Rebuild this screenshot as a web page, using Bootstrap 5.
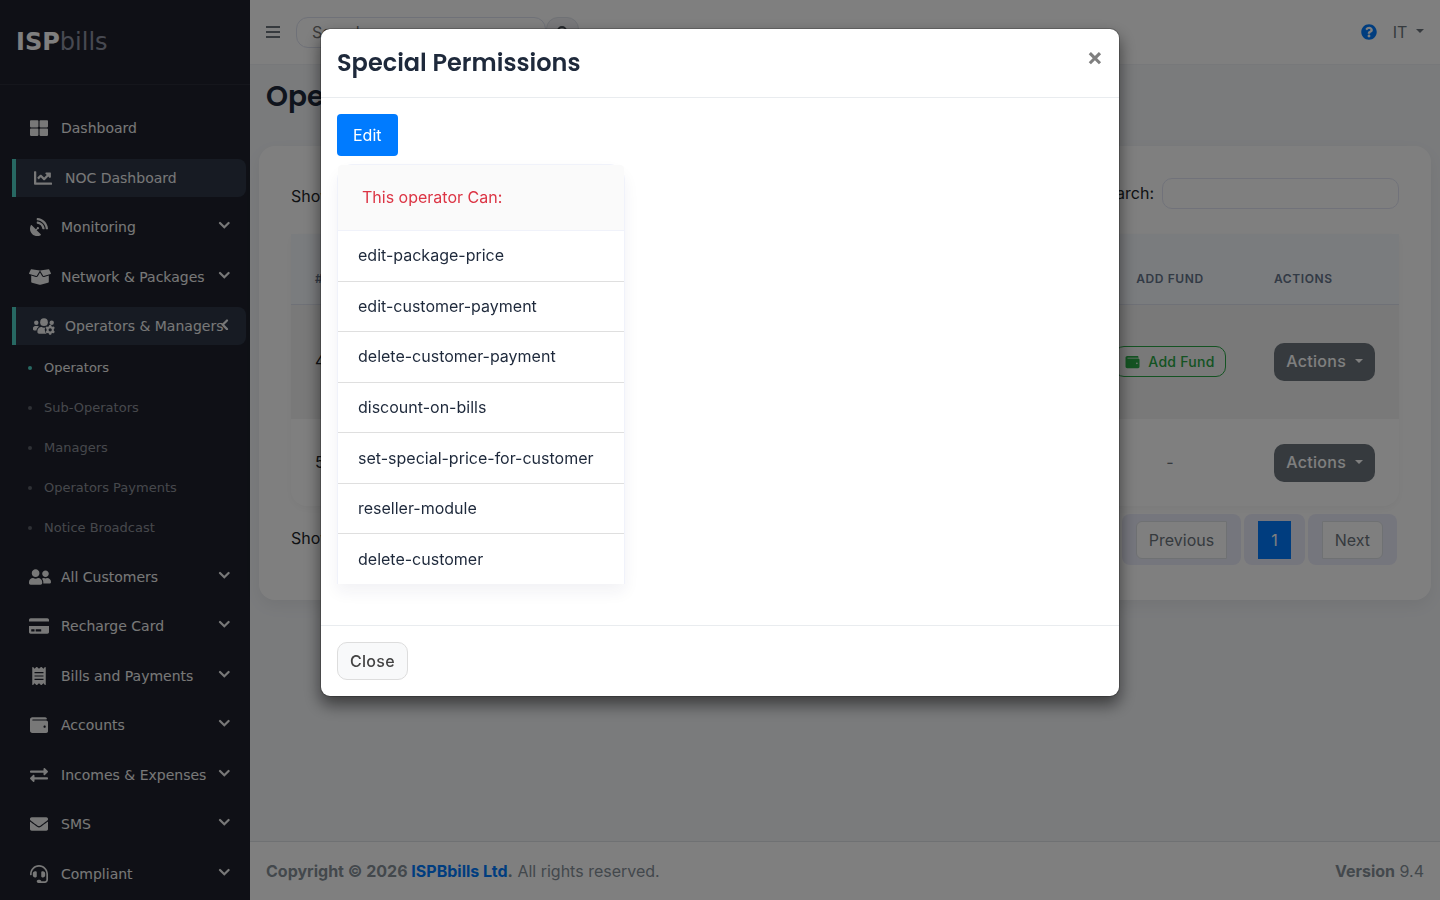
<!DOCTYPE html>
<html lang="en">
<head>
<meta charset="utf-8">
<meta name="viewport" content="width=device-width, initial-scale=1">
<title>Operators</title>
<link rel="stylesheet" href="https://cdn.jsdelivr.net/npm/bootstrap@5.3.0/dist/css/bootstrap.min.css">
<style>
  :root { --ink: #1e293b; }
  body { font-family: Inter, "Liberation Sans", sans-serif; font-size: 16px; line-height: 25px; color: #212529; background: #f4f6f9; }
  a { text-decoration: none; }
  .heading { font-family: Poppins, Inter, sans-serif; font-weight: 600; color: var(--ink); }
  svg { fill: currentColor; display: block; }

  .side { width: 250px; background: #1e212c; font-family: "DejaVu Sans", sans-serif; }
  .brand-bar { height: 85px; padding: 0 16px; font-size: 24px; color: #fff; border-bottom: 1px solid #2a2d38; }
  .brand-bar b { font-weight: 700; }
  .brand-bar span { color: #8f93a3; }
  .menu { padding: 24px 4px 0 12px; font-size: 14px; line-height: 22px; }
  .menu > li { margin-bottom: 12px; }
  .menu > li:nth-child(even) { margin-bottom: 11px; }
  .menu-link { height: 38px; padding: 0 16px 0 18px; color: #f0f0f0; border-radius: 0 8px 8px 0; position: relative; white-space: nowrap; }
  .menu-link.current { background: #2e3747; border-left: 4px solid #4fd1c5; }
  .menu-link .pic { width: 31px; flex: none; }
  .menu-link .wide { margin-left: -1px; }
  .menu-link .arrow { position: absolute; right: 16px; top: 11px; }
  .submenu { font-size: 13px; padding: 3px 0 0 16px; margin-bottom: -2px; }
  .submenu a { height: 40px; color: #8d9099; gap: 12px; }
  .submenu a::before { content: ""; width: 4px; height: 4px; border-radius: 50%; background: #5d606a; }
  .submenu a.current { color: #f0f0f0; }
  .submenu a.current::before { background: #4fd1c5; }

  .topbar { height: 65px; padding: 0 16px; background: #fff; border-bottom: 1px solid #eff1f5; color: #6c757d; }
  .top-search { width: 250px; height: 31px; border: 1px solid #dee2f0; border-radius: 12px; padding: 0 15px; background: #fff; }
  .top-go { width: 33px; height: 31px; border: 1px solid #dee2ea; border-radius: 12px; background: #f0f1f4; color: #495057; }
  .plain { border: 0; background: none; padding: 0; color: inherit; }
  .help { color: #007bff; }

  .page-title { font-size: 28px; line-height: 36px; padding: 14px 16px; margin: 0; }
  .panel { background: #fff; border-radius: 16px; margin: 17px 9px 0; padding: 32px 32px 35px; box-shadow: 0 6px 16px rgba(0,0,0,.06); }
  .length { padding-top: 6px; }
  .length select { border: 1px solid #d8dcf0; border-radius: 10px; background: #fff; line-height: 20px; }
  .filter { width: 237px; height: 31px; border: 1px solid #e2e5f4; border-radius: 10px; background: #fff; }
  .grid { width: 100%; margin: 25px 0 8px; border-radius: 0 0 16px 16px; box-shadow: 0 3px 8px rgba(0,0,0,.04); }
  .grid th { height: 70px; padding: 0 24px 16px; vertical-align: bottom; background: #f5f8fc; border-bottom: 1px solid #dfe3ee; font-size: 12px; line-height: 19px; font-weight: 600; letter-spacing: .05em; text-transform: uppercase; color: #64748b; }
  .grid td { padding: 24px; }
  .grid tbody tr { height: 87px; }
  .grid tbody tr:first-child { height: 115px; background: #f2f2f2; }
  .col-no { width: 90px; } .col-fund { width: 160px; } .col-act { width: 149px; }
  .btn-act { width: 101px; height: 38px; padding: 0; background: #6c757d; color: #fff; border: 0; border-radius: 10px; white-space: nowrap; }
  .btn-fund { height: 31px; padding: 0 10px; border: 1px solid #28a745; border-radius: 10px; color: #28a745; font-size: 14px; background: none; gap: 8px; white-space: nowrap; }
  .btn-act, .btn-fund, .btn-shut { font-weight: 500; letter-spacing: .02em; }
  .pager { gap: 3px; padding-right: 2px; }
  .pager li { background: #ebecfa; border-radius: 8px; padding: 7px 14px; height: 51px; }
  .pager a { display: block; height: 38px; line-height: 36px; padding: 0 12px; background: #fff; border: 1px solid #dee2e6; color: #6c757d; }
  .pager .on { background: #007bff; border-color: #007bff; color: #fff; }
  .foot { height: 59px; padding: 0 16px; background: #fff; border-top: 1px solid #dee2e6; color: #869099; }
  .foot a { color: #007bff; }

  .modal-content { border: 1px solid rgba(0,0,0,.2); border-radius: 10px; box-shadow: 0 8px 16px rgba(0,0,0,.5); color: var(--ink); background-clip: padding-box; }
  .modal-header { padding: 16px; border-color: #e9ecef; }
  .modal-title { font-size: 24px; line-height: 36px; }
  .shut { font-size: 24px; line-height: 24px; font-weight: 700; color: #7f7f7f; }
  .btn-edit { height: 42px; padding: 0 16px; background: #007bff; color: #fff; border-radius: 4px; }
  .perms { width: 288px; margin: 8px 0 25px; border: 1px solid #f0f2fa; border-bottom: 0; border-radius: 16px 16px 0 0; box-shadow: 0 8px 16px rgba(30,30,80,.06); }
  .perms-head { height: 66px; padding: 0 24px; background: #fafafa; color: #dc3545; border-bottom: 1px solid #f0f2fa; border-radius: 4px 4px 0 0; }
  .perms ul { min-height: 353px; background: #fff; }
  .perms li { flex: 1 1 0; padding: 0 20px; }
  .perms li + li { border-top: 1px solid #dfdfdf; }
  .modal-footer { padding: 16px; border-color: #e9ecef; }
  .modal-footer > * { margin: 0; }
  .btn-shut { width: 71px; height: 38px; padding: 0; background: #f8f9fa; border: 1px solid #ddd; border-radius: 10px; color: #444; }
</style>
</head>
<body>
<svg width="0" height="0" class="position-absolute" aria-hidden="true">
  <defs>
    <symbol id="down" viewBox="0 0 12 12"><path d="M2 4l4.300 4.300L10.600 4" fill="none" stroke="currentColor" stroke-width="2.200" stroke-linecap="round"/></symbol>
    <symbol id="left" viewBox="0 0 12 12"><path d="M9 2.500L4.700 6.800 9 11.100" fill="none" stroke="currentColor" stroke-width="2.200" stroke-linecap="round"/></symbol>
    <symbol id="wallet" viewBox="0 0 512 512"><path d="M461.2 128H80c-8.84 0-16-7.16-16-16s7.16-16 16-16h384c8.84 0 16-7.16 16-16 0-26.51-21.49-48-48-48H64C28.65 32 0 60.65 0 96v320c0 35.35 28.65 64 64 64h397.2c28.02 0 50.8-21.53 50.8-48V176c0-26.47-22.78-48-50.8-48zM416 336c-17.67 0-32-14.33-32-32s14.33-32 32-32 32 14.33 32 32-14.33 32-32 32z"/></symbol>
  </defs>
</svg>
<div class="d-flex vh-100 overflow-hidden">
  <aside class="side flex-shrink-0 overflow-hidden">
    <div class="brand-bar d-flex align-items-center"><b>ISP</b><span>bills</span></div>
    <ul class="menu list-unstyled mb-0">
      <li><a href="#" class="menu-link d-flex align-items-center"><span class="pic"><svg width="18" height="18" viewBox="0 0 512 512"><path d="M296 32h192c13.255 0 24 10.745 24 24v160c0 13.255-10.745 24-24 24H296c-13.255 0-24-10.745-24-24V56c0-13.255 10.745-24 24-24zm-80 0H24C10.745 32 0 42.745 0 56v160c0 13.255 10.745 24 24 24h192c13.255 0 24-10.745 24-24V56c0-13.255-10.745-24-24-24zM0 296v160c0 13.255 10.745 24 24 24h192c13.255 0 24-10.745 24-24V296c0-13.255-10.745-24-24-24H24c-13.255 0-24 10.745-24 24zm296 184h192c13.255 0 24-10.745 24-24V296c0-13.255-10.745-24-24-24H296c-13.255 0-24 10.745-24 24v160c0 13.255 10.745 24 24 24z"/></svg></span>Dashboard</a></li>
      <li><a href="#" class="menu-link current d-flex align-items-center"><span class="pic"><svg width="18" height="18" viewBox="0 0 512 512"><path d="M496 384H64V80c0-8.84-7.16-16-16-16H16C7.16 64 0 71.16 0 80v336c0 17.67 14.33 32 32 32h464c8.84 0 16-7.16 16-16v-32c0-8.84-7.16-16-16-16zM464 96H345.94c-21.38 0-32.09 25.85-16.97 40.97l32.4 32.4L288 242.75l-73.37-73.37c-12.5-12.5-32.76-12.5-45.25 0l-68.69 68.69c-6.25 6.25-6.25 16.38 0 22.63l22.62 22.62c6.25 6.25 16.38 6.25 22.63 0L192 237.25l73.37 73.37c12.5 12.5 32.76 12.5 45.25 0l96-96 32.4 32.4c15.12 15.12 40.97 4.41 40.97-16.97V112c.01-8.84-7.15-16-15.99-16z"/></svg></span>NOC Dashboard</a></li>
      <li><a href="#" class="menu-link d-flex align-items-center"><span class="pic"><svg width="18" height="18" viewBox="0 0 512 512"><path d="M305.45 462.59c7.39 7.29 6.18 20.1-3 25-77.71 41.8-176.72 29.9-242.35-35.7-65.62-65.7-77.45-164.6-35.6-242.4 4.9-9.1 17.69-10.3 25-3L166.23 323.35l27.4-27.4c-.68-2.6-1.6-5-1.6-7.8a32 32 0 1 1 32 32c-2.8 0-5.2-.9-7.8-1.6l-27.4 27.4zM511.98 303.06c.5 9.1-7.2 16.8-16.3 16.8h-32c-8.5 0-15.5-6.6-16.1-15.1C440.2 179.9 332 71.8 207.1 64.4c-8.5-.5-15.1-7.5-15.1-16.1v-32c0-9.1 7.7-16.8 16.8-16.3C371 9.1 503 140.9 511.98 303.06zm-96.2-.2c.6 9.2-7.1 17-16.3 17h-32c-8.3 0-15.4-6.3-16.1-14.6C344.9 229 283 167 206.7 160.6c-8.3-.7-14.7-7.8-14.7-16.1v-32c0-9.3 7.8-16.9 17-16.3 110.3 7.2 199.6 96.6 206.8 206.7z"/></svg></span>Monitoring<svg class="arrow" width="12" height="12"><use href="#down"/></svg></a></li>
      <li><a href="#" class="menu-link d-flex align-items-center"><span class="pic"><svg class="wide" width="22" height="18" viewBox="0 0 640 512"><path d="M425.7 256c-16.9 0-32.8-9-41.4-23.4L320 126l-64.2 106.6c-8.7 14.5-24.6 23.5-41.5 23.5-4.5 0-9-.6-13.3-1.9L64 215v178c0 14.7 10 27.5 24.2 31l216.2 54.1c10.2 2.5 20.9 2.5 31 0L551.8 424c14.2-3.6 24.2-16.4 24.2-31V215l-137 39.1c-4.3 1.3-8.8 1.9-13.3 1.9zm212.6-112.2L586.8 41c-3.1-6.2-9.8-9.8-16.7-8.9L320 64l91.7 152.1c3.8 6.3 11.4 9.3 18.5 7.3l197.9-56.5c9.9-2.9 14.7-13.9 10.2-23.1zM53.2 41L1.7 143.8c-4.6 9.2.3 20.2 10.1 23l197.9 56.5c7.1 2 14.7-1 18.5-7.3L320 64 69.8 32.1c-6.9-.8-13.5 2.7-16.6 8.900z"/></svg></span>Network &amp; Packages<svg class="arrow" width="12" height="12"><use href="#down"/></svg></a></li>
      <li>
        <a href="#" class="menu-link current d-flex align-items-center"><span class="pic"><svg class="wide" width="22" height="18" viewBox="0 0 640 512"><defs><mask id="gearcut"><rect width="640" height="512" fill="#fff"/><circle cx="500" cy="368" r="158" fill="#000"/></mask></defs><circle cx="96" cy="160" r="64"/><circle cx="320" cy="144" r="112"/><circle cx="544" cy="160" r="64"/><g mask="url(#gearcut)"><path d="M64 256h64c18 0 34 7 45 19-40 22-66 60-73 109H32c-18 0-32-14-32-32v-32c0-35 29-64 64-64zM243 288h9c44 21 93 21 137 0l60 40v152H176c-27 0-48-21-48-48v-29c0-64 52-115 115-115z"/></g><path fill-rule="evenodd" d="M472 224h56l8 38 32 18 38-12 28 48-28 26v52l28 26-28 48-38-12-32 18-8 38h-56l-8-38-32-18-38 12-28-48 28-26v-52l-28-26 28-48 38 12 32-18zM500 320a48 48 0 1 0 0 96 48 48 0 0 0 0-96z"/></svg></span>Operators &amp; Managers<svg class="arrow" width="12" height="12"><use href="#left"/></svg></a>
        <ul class="submenu list-unstyled">
          <li><a href="#" class="current d-flex align-items-center">Operators</a></li>
          <li><a href="#" class="d-flex align-items-center">Sub-Operators</a></li>
          <li><a href="#" class="d-flex align-items-center">Managers</a></li>
          <li><a href="#" class="d-flex align-items-center">Operators Payments</a></li>
          <li><a href="#" class="d-flex align-items-center">Notice Broadcast</a></li>
        </ul>
      </li>
      <li><a href="#" class="menu-link d-flex align-items-center"><span class="pic"><svg class="wide" width="22" height="18" viewBox="0 0 640 512"><path d="M192 256c61.9 0 112-50.1 112-112S253.900 32 192 32 80 82.1 80 144s50.1 112 112 112zm76.800 32h-8.300c-20.800 10-43.900 16-68.500 16s-47.600-6-68.500-16h-8.300C51.600 288 0 339.600 0 403.200V432c0 26.500 21.500 48 48 48h288c26.500 0 48-21.500 48-48v-28.800c0-63.600-51.600-115.200-115.200-115.200zM480 256c53 0 96-43 96-96s-43-96-96-96-96 43-96 96 43 96 96 96zm48 32h-3.800c-13.900 4.800-28.600 8-44.200 8s-30.300-3.200-44.200-8H432c-20.400 0-39.200 5.900-55.700 15.400 24.400 26.300 39.700 61.200 39.700 99.800v38.400c0 2.200-.5 4.300-.6 6.400H592c26.500 0 48-21.500 48-48 0-61.900-50.100-112-112-112z"/></svg></span>All Customers<svg class="arrow" width="12" height="12"><use href="#down"/></svg></a></li>
      <li><a href="#" class="menu-link d-flex align-items-center"><span class="pic"><svg class="wide" width="20" height="18" viewBox="0 0 576 512"><path d="M0 432c0 26.500 21.500 48 48 48h480c26.500 0 48-21.500 48-48V256H0v176zm192-68c0-6.600 5.400-12 12-12h136c6.600 0 12 5.400 12 12v40c0 6.600-5.400 12-12 12H204c-6.600 0-12-5.400-12-12v-40zm-128 0c0-6.600 5.400-12 12-12h72c6.600 0 12 5.400 12 12v40c0 6.600-5.400 12-12 12H76c-6.600 0-12-5.400-12-12v-40zM576 80v48H0V80c0-26.500 21.500-48 48-48h480c26.500 0 48 21.500 48 48z"/></svg></span>Recharge Card<svg class="arrow" width="12" height="12"><use href="#down"/></svg></a></li>
      <li><a href="#" class="menu-link d-flex align-items-center"><span class="pic"><svg width="18" height="18" viewBox="-64 0 512 512"><path d="M358.400 3.200L320 48 265.600 3.200a15.900 15.900 0 0 0-19.200 0L192 48 137.600 3.200a15.900 15.900 0 0 0-19.200 0L64 48 25.600 3.200C15-4.700 0 2.800 0 16v480c0 13.200 15 20.700 25.600 12.800L64 464l54.400 44.800a15.900 15.900 0 0 0 19.200 0L192 464l54.400 44.800a15.900 15.900 0 0 0 19.200 0L320 464l38.400 44.800c10.500 7.900 25.600.4 25.600-12.800V16c0-13.200-15-20.700-25.600-12.800zM320 360c0 4.400-3.600 8-8 8H72c-4.400 0-8-3.600-8-8v-16c0-4.400 3.600-8 8-8h240c4.400 0 8 3.600 8 8v16zm0-96c0 4.400-3.600 8-8 8H72c-4.400 0-8-3.600-8-8v-16c0-4.400 3.600-8 8-8h240c4.400 0 8 3.600 8 8v16zm0-96c0 4.400-3.600 8-8 8H72c-4.400 0-8-3.600-8-8v-16c0-4.400 3.600-8 8-8h240c4.400 0 8 3.600 8 8v16z"/></svg></span>Bills and Payments<svg class="arrow" width="12" height="12"><use href="#down"/></svg></a></li>
      <li><a href="#" class="menu-link d-flex align-items-center"><span class="pic"><svg width="18" height="18"><use href="#wallet"/></svg></span>Accounts<svg class="arrow" width="12" height="12"><use href="#down"/></svg></a></li>
      <li><a href="#" class="menu-link d-flex align-items-center"><span class="pic"><svg width="18" height="18" viewBox="0 0 512 512"><path d="M0 168v-16c0-13.255 10.745-24 24-24h360V80c0-21.367 25.899-32.042 40.971-16.971l80 80c9.372 9.373 9.372 24.569 0 33.941l-80 80C409.956 271.982 384 261.456 384 240v-48H24c-13.255 0-24-10.745-24-24zm488 152H128v-48c0-21.314-25.862-32.080-40.971-16.971l-80 80c-9.372 9.373-9.372 24.569 0 33.941l80 80C102.057 463.997 128 453.437 128 432v-48h360c13.255 0 24-10.745 24-24v-16c0-13.255-10.745-24-24-24z"/></svg></span>Incomes &amp; Expenses<svg class="arrow" width="12" height="12"><use href="#down"/></svg></a></li>
      <li><a href="#" class="menu-link d-flex align-items-center"><span class="pic"><svg width="18" height="18" viewBox="0 0 512 512"><path d="M502.300 190.800c3.900-3.100 9.700-.2 9.700 4.700V400c0 26.500-21.500 48-48 48H48c-26.500 0-48-21.500-48-48V195.600c0-5 5.700-7.800 9.700-4.700 22.400 17.400 52.100 39.500 154.100 113.600 21.100 15.400 56.700 47.800 92.200 47.600 35.700.3 72-32.800 92.300-47.600 102-74.100 131.600-96.300 154-113.700zM256 320c23.200.4 56.600-29.200 73.400-41.400 132.700-96.300 142.800-104.700 173.400-128.700 5.800-4.500 9.200-11.500 9.200-18.900v-19c0-26.500-21.500-48-48-48H48c-26.500 0-48 21.500-48 48v19c0 7.400 3.400 14.300 9.200 18.900 30.600 23.900 40.700 32.400 173.400 128.700 16.800 12.200 50.200 41.800 73.400 41.400z"/></svg></span>SMS<svg class="arrow" width="12" height="12"><use href="#down"/></svg></a></li>
      <li><a href="#" class="menu-link d-flex align-items-center"><span class="pic"><svg width="18" height="18" viewBox="0 0 512 512"><path d="M192 208c0-17.670-14.330-32-32-32h-16c-35.350 0-64 28.650-64 64v48c0 35.350 28.650 64 64 64h16c17.670 0 32-14.330 32-32V208zm176 144c35.350 0 64-28.650 64-64v-48c0-35.350-28.650-64-64-64h-16c-17.670 0-32 14.330-32 32v112c0 17.670 14.330 32 32 32h16zM256 0C113.180 0 4.580 118.830 0 256v16c0 8.840 7.160 16 16 16h16c8.840 0 16-7.160 16-16v-16c0-114.690 93.310-208 208-208s208 93.310 208 208h-.12c.08 2.430.12 165.720.12 165.720 0 23.350-18.930 42.280-42.280 42.280H320c0-26.510-21.490-48-48-48h-32c-26.510 0-48 21.490-48 48s21.490 48 48 48h181.720c49.860 0 90.280-40.420 90.280-90.280V256C507.420 118.830 398.820 0 256 0z"/></svg></span>Compliant<svg class="arrow" width="12" height="12"><use href="#down"/></svg></a></li>
    </ul>
  </aside>

  <div class="d-flex flex-column flex-grow-1">
    <header class="topbar d-flex align-items-center">
      <button class="plain" aria-label="Toggle menu"><svg width="14" height="14" viewBox="0 0 14 14"><path d="M0 1h14v2H0zM0 6h14v2H0zM0 11h14v2H0z"/></svg></button>
      <form class="d-flex ms-3"><input class="top-search" type="search" placeholder="Search" aria-label="Search"><button type="button" class="top-go d-flex align-items-center justify-content-center p-0" aria-label="Go"><svg width="14" height="14" viewBox="0 0 14 14"><path d="M10 6A4 4 0 1 1 2 6a4 4 0 0 1 8 0zM9 9l4 4" fill="none" stroke="currentColor" stroke-width="2"/></svg></button></form>
      <div class="ms-auto d-flex align-items-center gap-3">
        <a href="#" aria-label="Help" class="help"><svg width="16" height="16" viewBox="0 0 512 512"><path d="M504 256c0 136.997-111.043 248-248 248S8 392.997 8 256C8 119.083 119.043 8 256 8s248 111.083 248 248zM262.655 90c-54.497 0-89.255 22.957-116.549 63.758-3.536 5.286-2.353 12.415 2.715 16.258l34.699 26.310c5.205 3.947 12.621 3.008 16.665-2.122 17.864-22.658 30.113-35.797 57.303-35.797 20.429 0 45.698 13.148 45.698 32.958 0 14.976-12.363 22.667-32.534 33.976C247.128 238.528 216 254.941 216 296v4c0 6.627 5.373 12 12 12h56c6.627 0 12-5.373 12-12v-1.333c0-28.462 83.186-29.647 83.186-106.667 0-58.002-60.165-102-116.531-102zM256 338c-25.365 0-46 20.635-46 46 0 25.364 20.635 46 46 46s46-20.636 46-46c0-25.364-20.635-46-46-46z"/></svg></a>
        <button class="plain dropdown-toggle">IT&nbsp;</button>
      </div>
    </header>
    <main class="flex-grow-1">
      <h1 class="heading page-title">Operators</h1>
      <section class="panel">
        <div class="d-flex justify-content-between align-items-center">
          <label class="length">Show <select><option>10</option><option>25</option></select></label>
          <div class="d-flex align-items-center gap-2"><label for="filter">Search:</label><input id="filter" class="filter" type="text"></div>
        </div>
        <table class="grid">
          <thead><tr><th class="col-no">#</th><th>Name</th><th class="col-fund text-center">Add Fund</th><th class="col-act">Actions</th></tr></thead>
          <tbody>
            <tr><td>4</td><td></td><td class="text-center px-0"><button class="btn-fund d-inline-flex align-items-center"><svg width="15" height="14"><use href="#wallet"/></svg>Add Fund</button></td><td><button class="btn-act dropdown-toggle">Actions&nbsp;</button></td></tr>
            <tr><td>5</td><td></td><td class="text-center text-secondary">-</td><td><button class="btn-act dropdown-toggle">Actions&nbsp;</button></td></tr>
          </tbody>
        </table>
        <div class="d-flex justify-content-between align-items-start">
          <span class="pt-2 mt-1">Showing 1 to 2 of 2 entries</span>
          <ul class="pager list-unstyled d-flex mb-0">
            <li><a href="#" class="rounded-start">Previous</a></li><li><a href="#" class="on">1</a></li><li><a href="#" class="rounded-end">Next</a></li>
          </ul>
        </div>
      </section>
    </main>
    <footer class="foot d-flex align-items-center justify-content-between">
      <div><strong>Copyright © 2026 <a href="#">ISPBbills Ltd</a>.</strong> All rights reserved.</div>
      <div><b>Version</b> 9.4</div>
    </footer>
  </div>
</div>

<div class="modal-backdrop show"></div>
<div class="modal d-block" role="dialog" aria-labelledby="perm-title">
  <div class="modal-dialog modal-lg">
    <div class="modal-content">
      <div class="modal-header align-items-start">
        <h2 id="perm-title" class="modal-title heading">Special Permissions</h2>
        <button class="plain shut" aria-label="Close">×</button>
      </div>
      <div class="modal-body py-3 px-3">
        <a href="#" class="btn-edit d-inline-flex align-items-center">Edit</a>
        <div class="perms">
          <div class="perms-head d-flex align-items-center">This operator Can:</div>
          <ul class="list-unstyled d-flex flex-column mb-0">
            <li class="d-flex align-items-center">edit-package-price</li>
            <li class="d-flex align-items-center">edit-customer-payment</li>
            <li class="d-flex align-items-center">delete-customer-payment</li>
            <li class="d-flex align-items-center">discount-on-bills</li>
            <li class="d-flex align-items-center">set-special-price-for-customer</li>
            <li class="d-flex align-items-center">reseller-module</li>
            <li class="d-flex align-items-center">delete-customer</li>
          </ul>
        </div>
      </div>
      <div class="modal-footer justify-content-start">
        <button class="btn-shut">Close</button>
      </div>
    </div>
  </div>
</div>
<script src="https://cdn.jsdelivr.net/npm/bootstrap@5.3.0/dist/js/bootstrap.bundle.min.js"></script>
</body>
</html>
